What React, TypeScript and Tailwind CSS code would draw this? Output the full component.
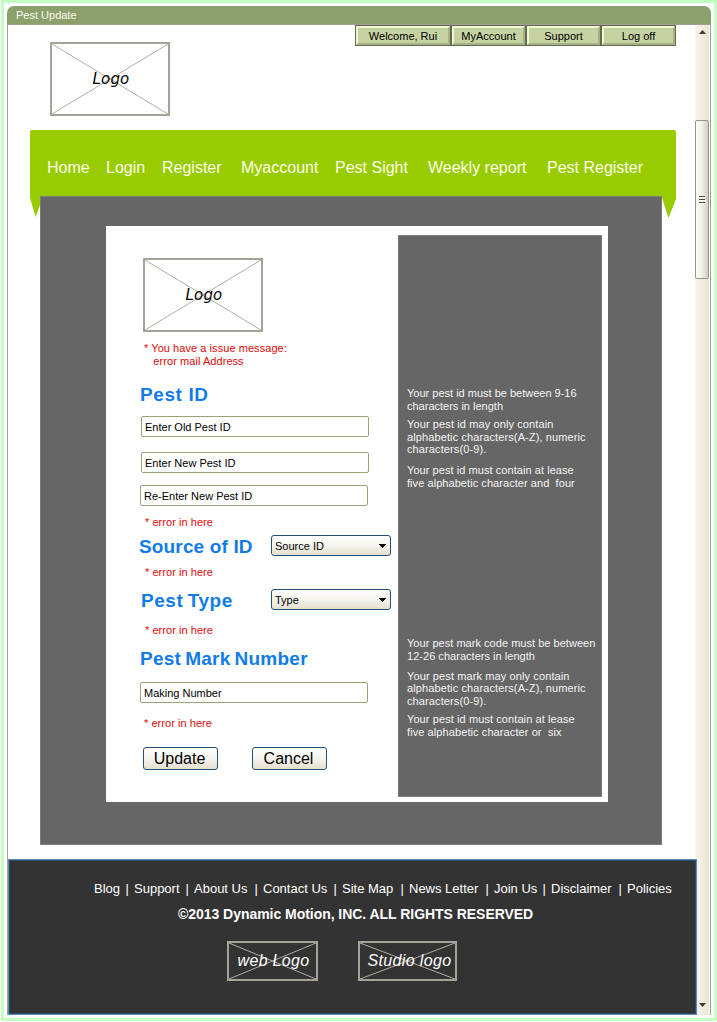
import React from 'react';
import clsx from 'clsx';

const topMenu = [
  { label: 'Welcome, Rui', width: 'w-[96px]' },
  { label: 'MyAccount', width: 'w-[75px]' },
  { label: 'Support', width: 'w-[75px]' },
  { label: 'Log off', width: 'w-[75px]' },
];

const navItems = [
  { label: 'Home', width: 'w-[59px]' },
  { label: 'Login', width: 'w-[56px]' },
  { label: 'Register', width: 'w-[79px]' },
  { label: 'Myaccount', width: 'w-[94px]' },
  { label: 'Pest Sight', width: 'w-[93px]' },
  { label: 'Weekly report', width: 'w-[119px]' },
  { label: 'Pest Register', width: 'w-[110px]' },
];

const footerLinks = [
  { label: 'Blog', width: 'w-[40px]' },
  { label: 'Support', width: 'w-[60px]' },
  { label: 'About Us', width: 'w-[69px]' },
  { label: 'Contact Us', width: 'w-[79px]' },
  { label: 'Site Map', width: 'w-[67px]' },
  { label: 'News Letter', width: 'w-[85px]' },
  { label: 'Join Us', width: 'w-[57px]' },
  { label: 'Disclaimer', width: 'w-[76px]' },
  { label: 'Policies', width: 'w-[54px]' },
];

function LogoBox({ label, className, textClass }: { label: string; className: string; textClass: string }) {
  return (
    <div className={clsx('relative grid place-items-center border-2 border-[#a5a297]', className)}>
      <svg className="absolute inset-0 h-full w-full" viewBox="0 0 100 100" preserveAspectRatio="none">
        <path d="M0 0L100 100M0 100L100 0" stroke="#b0ada4" strokeWidth="1" vectorEffect="non-scaling-stroke" fill="none" />
      </svg>
      <span className={clsx('relative whitespace-nowrap italic', textClass)}>{label}</span>
    </div>
  );
}

function ErrorNote({ className }: { className?: string }) {
  return <p className={clsx('h-3 leading-3 tracking-[0.05px] text-[#e00808] whitespace-pre', className)}>{'* error in here'}</p>;
}

function Heading({ children, className }: { children: string; className?: string }) {
  return <h2 className={clsx('h-6 whitespace-nowrap text-[19px] leading-6 font-bold text-[#117ce8]', className)}>{children}</h2>;
}

function Field({ value, className }: { value: string; className?: string }) {
  return (
    <input
      readOnly
      value={value}
      className={clsx('block h-[21px] w-[228px] rounded-[2px] border border-[#98a579] bg-white px-[3px] text-[11px] text-black outline-none', className)}
    />
  );
}

function Dropdown({ value }: { value: string }) {
  return (
    <button className="flex h-[21px] w-[120px] items-center justify-between rounded-[3px] border border-[#244f73] bg-linear-to-b from-white via-[#f5f4ee] to-[#e4dfd0] pr-1 pl-[3px] text-black">
      <span className="pt-px">{value}</span>
      <svg width="8" height="4" viewBox="0 0 8 4" shapeRendering="crispEdges"><path d="M0 0H8L4 4Z" /></svg>
    </button>
  );
}

function ActionButton({ children }: { children: string }) {
  return (
    <button className="h-[23px] w-[75px] rounded-[3px] border border-[#244f73] bg-linear-to-b from-white via-[#f5f4ee] to-[#e4dfd0] pr-0.5 text-[16px] leading-[21px] text-black">
      {children}
    </button>
  );
}

function PestForm() {
  return (
    <div className="w-[292px] shrink-0 pt-[32px] pl-[33px]">
      <LogoBox label="Logo" className="ml-1 h-[74px] w-[120px]" textClass="font-['DejaVu_Sans',sans-serif] text-[15px] tracking-[0.2px] text-black leading-5 pb-px pl-0.5" />
      <p className="mt-[10px] ml-[5px] h-[26px] leading-[13px] tracking-[0.06px] whitespace-pre text-[#e00808]">{'* You have a issue message:\n   error mail Address'}</p>
      <Heading className="mt-[15px] ml-px tracking-[0.6px]">Pest ID</Heading>
      <Field value="Enter Old Pest ID" className="mt-[9px] ml-[2px]" />
      <Field value="Enter New Pest ID" className="mt-[15px] ml-[2px]" />
      <Field value="Re-Enter New Pest ID" className="mt-3 ml-px" />
      <ErrorNote className="mt-[10px] ml-[6px]" />
      <div className="mt-[7px] flex h-[21px] items-center justify-between pr-[7px]">
        <Heading className="relative top-px tracking-[0.15px]">Source of ID</Heading>
        <Dropdown value="Source ID" />
      </div>
      <ErrorNote className="mt-[10px] ml-[6px]" />
      <div className="mt-[11px] ml-[2px] flex h-[21px] items-center justify-between pr-[7px]">
        <Heading className="relative top-px tracking-[0.55px] [word-spacing:-1.5px]">Pest Type</Heading>
        <Dropdown value="Type" />
      </div>
      <ErrorNote className="mt-[14px] ml-[6px]" />
      <Heading className="mt-[11px] ml-px tracking-[0.25px] [word-spacing:-1.5px]">Pest Mark Number</Heading>
      <Field value="Making Number" className="mt-[11px] ml-px" />
      <ErrorNote className="mt-[14px] ml-[5px]" />
      <div className="mt-[18px] ml-1 flex gap-[34px]">
        <ActionButton>Update</ActionButton>
        <ActionButton>Cancel</ActionButton>
      </div>
    </div>
  );
}

function Guidelines() {
  return (
    <aside className="mt-[9px] h-[562px] w-[204px] border border-[#7d7d7d] bg-[#666] pt-[151px] pl-2 leading-[13px] whitespace-pre text-[#f4f4f4]">
      <p>{'Your pest id must be between 9-16\ncharacters in length'}</p>
      <p className="mt-[5px] leading-[12.6px] tracking-[0.11px]">{'Your pest id may only contain\nalphabetic characters(A-Z), numeric\ncharacters(0-9).'}</p>
      <p className="mt-2 tracking-[0.06px]">{'Your pest id must contain at lease\nfive alphabetic character and  four'}</p>
      <p className="mt-[147px] tracking-[0.03px]">{'Your pest mark code must be between\n12-26 characters in length'}</p>
      <p className="mt-[7px] leading-[12.6px] tracking-[0.11px]">{'Your pest mark may only contain\nalphabetic characters(A-Z), numeric\ncharacters(0-9).'}</p>
      <p className="mt-[5px] tracking-[0.09px]">{'Your pest id must contain at lease\nfive alphabetic character or  six'}</p>
    </aside>
  );
}

function Footer() {
  return (
    <footer className="relative z-10 mt-[14px] h-[156px] w-[689px] border-2 border-[#234d79] bg-[#333] pt-[20px] text-white outline-1 -outline-offset-1 outline-[#6288ad]">
      <div className="ml-[84px] flex h-4 text-[13px] leading-4 whitespace-nowrap">
        {footerLinks.map((l, i) => (
          <div key={l.label} className={clsx('flex shrink-0 justify-between pr-[5px]', l.width)}>
            <span>{l.label}</span>
            {i < footerLinks.length - 1 && <span>|</span>}
          </div>
        ))}
      </div>
      <p className="mt-[9px] ml-[168px] h-[17px] text-[14px] leading-[17px] font-bold tracking-[-0.04px] whitespace-nowrap">©2013 Dynamic Motion, INC. ALL RIGHTS RESERVED</p>
      <div className="mt-[18px] ml-[217px] flex gap-10">
        <LogoBox label="web Logo" className="h-10 w-[91px]" textClass="text-[16px] tracking-[0.3px] pl-0.5" />
        <LogoBox label="Studio logo" className="h-10 w-[99px]" textClass="text-[16px] tracking-[0.35px] pl-1" />
      </div>
    </footer>
  );
}

function Scrollbar() {
  return (
    <div className="mr-px flex w-[14px] shrink-0 flex-col items-center bg-linear-to-r from-[#f7f5ec] to-[#e8e5d5]">
      <svg className="mt-[5px]" width="7" height="4" viewBox="0 0 7 4"><path d="M0 4L3.5 0L7 4Z" fill="#3d3a32" /></svg>
      <div className="mt-[86px] grid h-[159px] w-[14px] place-items-center rounded-[2px] border border-[#96938a] bg-linear-to-r from-[#fdfcf8] via-[#f1efe6] to-[#d2cebf]">
        <svg width="7" height="8" viewBox="0 0 7 8"><path d="M0 .5H6M0 3.5H6M0 6.5H6" stroke="#4d4a42" /><path d="M1 1.5H7M1 4.5H7M1 7.5H7" stroke="#fff" /></svg>
      </div>
      <svg className="mt-[724px]" width="7" height="4" viewBox="0 0 7 4"><path d="M0 0L3.5 4L7 0Z" fill="#3d3a32" /></svg>
    </div>
  );
}

export default function App() {
  return (
    <div className="h-[1022px] w-[717px] overflow-hidden bg-white pb-px pl-px font-['Liberation_Sans',Arial,sans-serif] text-[11px]">
      <div className="h-[1021px] w-[716px] border-3 border-[#c4ffc4] bg-white pt-[3px] pl-[3px]">
        <div className="h-[1009px] w-[704px]">
          <div className="h-[18px] rounded-t-[7px] bg-[#8ca06b] pl-[9px] leading-[18px] text-[#fafff0]">Pest Update</div>
          <div className="flex h-[991px] border-x border-t border-[#a29e93]">
            <main className="w-[687px] shrink-0">
              <header className="flex h-[105px] justify-between pl-[42px]">
                <LogoBox label="Logo" className="mt-[17px] h-[74px] w-[120px]" textClass="font-['DejaVu_Sans',sans-serif] text-[15px] tracking-[0.2px] text-black leading-5 pb-px pl-0.5" />
                <div className="mr-[19px] flex h-[21px] bg-[#666b57]">
                  {topMenu.map((m) => (
                    <button key={m.label} className={clsx('border border-[#646956] text-black', m.width)}>
                      <span className="flex h-full items-center justify-center border-2 border-t-[#f1f7cf] border-r-[#a5b282] border-b-[#a5b282] border-l-[#f1f7cf] bg-[#c6d2a2] pt-px">{m.label}</span>
                    </button>
                  ))}
                </div>
              </header>
              <nav className="ml-[22px] flex h-[66px] w-[646px] rounded-t-[2px] bg-[#9c0] pt-[28px] pl-[17px] text-[16px] leading-5 whitespace-nowrap text-[#fcffe9]">
                {navItems.map((n) => (
                  <a key={n.label} className={clsx('shrink-0', n.width)}>{n.label}</a>
                ))}
              </nav>
              <div className="ml-[22px] flex w-[646px]">
                <svg className="shrink-0" width="10" height="22" viewBox="0 0 10 22"><path d="M0 0H10V9L5.7 21L0 2Z" fill="#9c0" /></svg>
                <section className="h-[649px] w-[622px] shrink-0 border border-[#7d7d7d] bg-[#666] pt-[29px] pl-[65px]">
                  <div className="flex h-[576px] w-[502px] bg-white">
                    <PestForm />
                    <Guidelines />
                  </div>
                </section>
                <svg className="shrink-0" width="14" height="22" viewBox="0 0 14 22"><path d="M0 0H14V3L6.5 22L0 2Z" fill="#9c0" /></svg>
              </div>
              <Footer />
            </main>
            <Scrollbar />
          </div>
        </div>
      </div>
    </div>
  );
}
